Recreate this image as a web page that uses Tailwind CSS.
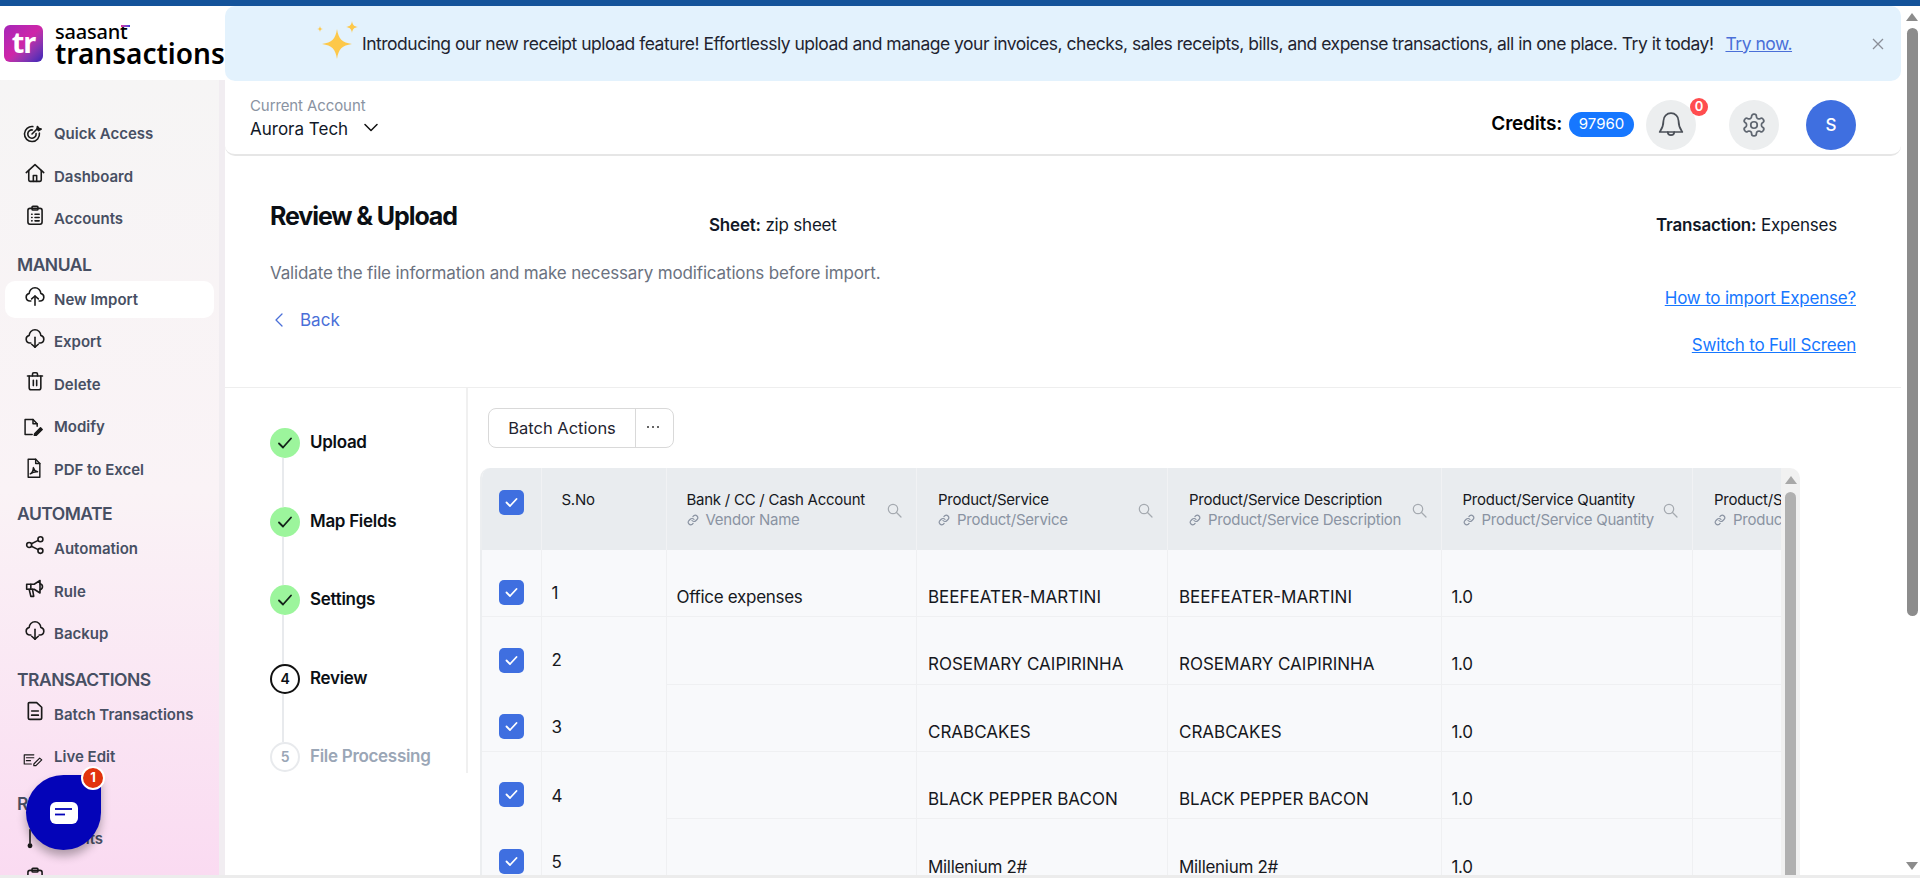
<!DOCTYPE html>
<html lang="en">
<head>
    <meta charset="UTF-8">
    <title>SaasAnt Transactions - Review & Upload</title>
    <script src="https://cdn.jsdelivr.net/npm/@tailwindcss/browser@4"></script>
</head>
<body class="relative h-[878px] overflow-hidden bg-white font-['Inter',sans-serif] text-[#111827]">
    <!-- Top bar -->
    <div class="h-[6px] bg-[#14539a]"></div>

    <div class="flex h-[869px]">
        <!-- Sidebar -->
        <aside class="w-[225px] shrink-0 flex flex-col overflow-hidden">
            <div class="h-[74px] shrink-0 bg-white flex items-center pl-[4px]">
                <div class="w-[39px] h-[37px] shrink-0 rounded-[6px] bg-linear-to-br from-[#a524b8] via-[#cf25a8] to-[#3a1fb8] flex items-center justify-center text-white text-[29px] font-bold leading-none font-['Noto_Sans',sans-serif] tracking-[-1px] pb-[3px]">tr</div>
                <div class="ml-[12px] pt-[3px] flex flex-col text-black font-['Noto_Sans',sans-serif]">
                    <span class="relative text-[20px] leading-[17px] font-medium tracking-[-0.2px] w-fit">saasant<span class="absolute right-[-2px] top-[2px] w-[9px] h-[2px] bg-linear-to-r from-[#e0209f] to-[#3a3ae0]"></span></span>
                    <span class="text-[28px] leading-[26px] font-semibold">transactions</span>
                </div>
            </div>
            <nav class="flex-1 border-r-[6px] border-[#f1edf1] bg-linear-to-b from-[#f6f5f5] via-[#faf3f6] via-50% to-[#fad9f1] pt-[33px] text-[15px] font-semibold text-[#474f63]">
                <a class="h-[42.5px] pl-[20px] flex items-center gap-[8px]">
                    <svg class="w-[20px] h-[20px] ml-[2px] mr-[4px] shrink-0" viewBox="0 0 24 24" fill="none" stroke="#1a1a1a" stroke-width="1.900" stroke-linecap="round" stroke-linejoin="round"><path d="M13 3.100A9 9 0 1 0 20.900 11"/><path d="M12.500 7.100A5 5 0 1 0 16.900 11.500"/><path d="M12 12l6-6"/><path d="M18 6l.5-3 2 2.500 2.500.5-3 2z" fill="#1a1a1a"/></svg>
                    <span>Quick Access</span>
                </a>
                <a class="h-[42.5px] pl-[20px] flex items-center gap-[8px]">
                    <svg class="w-[20px] h-[20px] ml-[5px] mr-[1px] shrink-0 -mt-2" viewBox="0 0 24 24" fill="none" stroke="#1a1a1a" stroke-width="1.900" stroke-linecap="round" stroke-linejoin="round"><path d="M1.500 11.500 12 2l10.500 9.500"/><path d="M4.500 9v11.500a1.500 1.500 0 0 0 1.500 1.500h12a1.500 1.500 0 0 0 1.500-1.500V9"/><path d="M10 22v-7h4v7"/></svg>
                    <span>Dashboard</span>
                </a>
                <a class="h-[42.5px] pl-[20px] flex items-center gap-[8px]">
                    <svg class="w-[20px] h-[20px] ml-[5px] mr-[1px] shrink-0 -mt-2" viewBox="0 0 24 24" fill="none" stroke="#1a1a1a" stroke-width="1.900" stroke-linecap="round" stroke-linejoin="round"><rect x="3.500" y="4" width="17" height="19" rx="2.500"/><rect x="8.500" y="1.500" width="7" height="4.500" rx="1"/><path d="M8 11h.5M8 15h.5M8 19h.5M12 11h5M12 15h5M12 19h5"/></svg>
                    <span>Accounts</span>
                </a>

                <div class="h-[38px] pl-[17px] pb-[3px] flex items-end text-[17.500px] leading-[22px] tracking-[-0.5px]">MANUAL</div>
                <div class="h-[42.5px] px-[5px] flex items-center">
                    <a class="w-full h-[37px] pl-[15px] flex items-center gap-[8px] bg-white rounded-[10px]">
                        <svg class="w-[20px] h-[20px] ml-[5px] mr-[1px] shrink-0 -mt-2" viewBox="0 0 24 24" fill="none" stroke="#1a1a1a" stroke-width="1.900" stroke-linecap="round" stroke-linejoin="round"><path d="M7 18H6a4.500 4.500 0 0 1-1-8.900 7 7 0 0 1 14 0A4.500 4.500 0 0 1 18 18h-1"/><path d="M12 23V12"/><path d="M8 15.500 12 12l4 3.500"/></svg>
                        <span>New Import</span>
                    </a>
                </div>
                <a class="h-[42.5px] pl-[20px] flex items-center gap-[8px]">
                    <svg class="w-[20px] h-[20px] ml-[5px] mr-[1px] shrink-0 -mt-2" viewBox="0 0 24 24" fill="none" stroke="#1a1a1a" stroke-width="1.900" stroke-linecap="round" stroke-linejoin="round"><path d="M7 18H6a4.500 4.500 0 0 1-1-8.900 7 7 0 0 1 14 0A4.500 4.500 0 0 1 18 18h-1"/><path d="M12 11v12"/><path d="M8 19.500 12 23l4-3.500"/></svg>
                    <span>Export</span>
                </a>
                <a class="h-[42.5px] pl-[20px] flex items-center gap-[8px]">
                    <svg class="w-[20px] h-[20px] ml-[5px] mr-[1px] shrink-0 -mt-2" viewBox="0 0 24 24" fill="none" stroke="#1a1a1a" stroke-width="1.900" stroke-linecap="round" stroke-linejoin="round"><path d="M3 6h18"/><path d="M9 6V3.500A1.500 1.500 0 0 1 10.500 2h3A1.500 1.500 0 0 1 15 3.500V6"/><path d="M5 6v14a2.500 2.500 0 0 0 2.500 2.500h9A2.500 2.500 0 0 0 19 20V6"/><path d="M10 11v6.500M14 11v6.500"/></svg>
                    <span>Delete</span>
                </a>
                <a class="h-[42.5px] pl-[20px] flex items-center gap-[8px]">
                    <svg class="w-[20px] h-[20px] ml-[3px] mr-[3px] shrink-0" viewBox="0 0 24 24" fill="none" stroke="#1a1a1a" stroke-width="1.800" stroke-linecap="round" stroke-linejoin="round"><path d="M11 21H2.500V3H12l5 5v3"/><path d="M12 3v5h5"/><path d="M14 20l7-7 2 2-7 7h-2.500z" fill="#1a1a1a"/></svg>
                    <span>Modify</span>
                </a>
                <a class="h-[42.5px] pl-[20px] flex items-center gap-[8px]">
                    <svg class="w-[20px] h-[20px] ml-[4px] mr-[2px] shrink-0 -mt-1" viewBox="0 0 24 24" fill="none" stroke="#1a1a1a" stroke-width="1.700" stroke-linecap="round" stroke-linejoin="round"><path d="M19 23H5V1.500h9l5 5z"/><path d="M14 1.500v5h5"/><path d="M7.500 19c2-1 3.500-4 3.800-7.500.6 3 2.200 4.500 5 5-3-.3-6 .6-8.800 2.500z"/></svg>
                    <span>PDF to Excel</span>
                </a>

                <div class="h-[37px] pl-[17px] pb-[3px] flex items-end text-[17.500px] leading-[22px] tracking-[-0.5px]">AUTOMATE</div>
                <a class="h-[42.5px] pl-[20px] flex items-center gap-[8px]">
                    <svg class="w-[20px] h-[20px] ml-[5px] mr-[1px] shrink-0 -mt-2" viewBox="0 0 24 24" fill="none" stroke="#1a1a1a" stroke-width="1.900" stroke-linecap="round" stroke-linejoin="round"><circle cx="18.500" cy="5" r="3"/><circle cx="5" cy="12" r="3"/><circle cx="18.500" cy="19" r="3"/><path d="M7.700 10.500 15.800 6.400M7.700 13.500l8.100 4.100"/></svg>
                    <span>Automation</span>
                </a>
                <a class="h-[42.5px] pl-[20px] flex items-center gap-[8px]">
                    <svg class="w-[20px] h-[20px] ml-[5px] mr-[1px] shrink-0 -mt-2" viewBox="0 0 24 24" fill="none" stroke="#1a1a1a" stroke-width="1.900" stroke-linecap="round" stroke-linejoin="round"><path d="M2 7.500h9l7-4.500v15l-7-4.500H2z"/><path d="M7 7.500v6M18 7c2 .5 3 2 3 3.500s-1 3-3 3.500"/><path d="M5 13.500 7 22h3.500l-1.500-8.500"/></svg>
                    <span>Rule</span>
                </a>
                <a class="h-[42.5px] pl-[20px] flex items-center gap-[8px]">
                    <svg class="w-[20px] h-[20px] ml-[5px] mr-[1px] shrink-0 -mt-2" viewBox="0 0 24 24" fill="none" stroke="#1a1a1a" stroke-width="1.900" stroke-linecap="round" stroke-linejoin="round"><path d="M7 18H6a4.500 4.500 0 0 1-1-8.900 7 7 0 0 1 14 0A4.500 4.500 0 0 1 18 18h-1"/><path d="M12 11v12"/><path d="M8 19.500 12 23l4-3.500"/></svg>
                    <span>Backup</span>
                </a>

                <div class="h-[38px] pl-[17px] pb-[3px] flex items-end text-[17.500px] leading-[22px] tracking-[-0.5px]">TRANSACTIONS</div>
                <a class="h-[42.5px] pl-[20px] flex items-center gap-[8px]">
                    <svg class="w-[20px] h-[20px] ml-[5px] mr-[1px] shrink-0 -mt-2" viewBox="0 0 24 24" fill="none" stroke="#1a1a1a" stroke-width="2" stroke-linecap="round" stroke-linejoin="round"><path d="M5 2h9l6 5.500V20a2 2 0 0 1-2 2H6a2 2 0 0 1-2-2V3a1 1 0 0 1 1-1z"/><path d="M8 12h8M8 17h8"/></svg>
                    <span>Batch Transactions</span>
                </a>
                <a class="h-[42.5px] pl-[20px] flex items-center gap-[8px]">
                    <svg class="w-[20px] h-[20px] ml-[3px] mr-[3px] shrink-0 mt-1" viewBox="0 0 24 24" fill="none" stroke="#1a1a1a" stroke-width="1.400" stroke-linecap="round" stroke-linejoin="round"><path d="M13 7H1.500v11H10"/><path d="M4 10.500h9M4 14h5"/><path d="M13 18l7-7 2.500 2-7 7H13z"/></svg>
                    <span>Live Edit</span>
                </a>

                <div class="h-[39px] pl-[17px] pb-[3px] flex items-end text-[17.500px] leading-[22px] tracking-[-0.5px]">REPORTS</div>
                <a class="h-[42.5px] pl-[20px] flex items-center gap-[8px]">
                    <svg class="w-[20px] h-[20px] ml-[5px] mr-[1px] shrink-0" viewBox="0 0 24 24" fill="none" stroke="#1a1a1a" stroke-width="1.900" stroke-linecap="round" stroke-linejoin="round"><path d="M6 1v16"/><circle cx="6" cy="20" r="2" fill="#1a1a1a"/></svg>
                    <span>Events</span>
                </a>
                <a class="h-[42.5px] pl-[20px] flex items-center gap-[8px]">
                    <svg class="w-[20px] h-[20px] ml-[5px] mr-[1px] shrink-0 -mt-2" viewBox="0 0 24 24" fill="none" stroke="#1a1a1a" stroke-width="1.900" stroke-linecap="round" stroke-linejoin="round"><rect x="3.500" y="4" width="17" height="19" rx="2.500"/><rect x="8.500" y="1.500" width="7" height="4.500" rx="1"/><path d="M8 11h.5M8 15h.5M12 11h5M12 15h5"/></svg>
                    <span>Account Summary</span>
                </a>
            </nav>
        </aside>

        <!-- Main -->
        <main class="w-[1676px] shrink-0 flex flex-col">
            <!-- Announcement -->
            <div class="h-[75px] shrink-0 rounded-[10px] bg-[#e3f2fd] flex items-center pl-[90px] pr-[16px] text-[17.500px] tracking-[-0.49px] text-[#1f2430]">
                <svg class="w-[46px] h-[46px] shrink-0" viewBox="0 0 46 46" fill="#fdc84a"><path d="M22 8c1.500 10 5 13.500 15 15-10 1.500-13.500 5-15 15-1.500-10-5-13.500-15-15 10-1.500 13.500-5 15-15z"/><path d="M37 0c.6 4 2 5.400 6 6-4 .6-5.400 2-6 6-.6-4-2-5.400-6-6 4-.6 5.400-2 6-6z"/><path d="M5 5c.3 2 1 2.700 3 3-2 .3-2.700 1-3 3-.3-2-1-2.700-3-3 2-.3 2.700-1 3-3z"/></svg>
                <span class="ml-[1px] pt-[1px] whitespace-nowrap">Introducing our new receipt upload feature! Effortlessly upload and manage your invoices, checks, sales receipts, bills, and expense transactions, all in one place. Try it today!</span>
                <a class="ml-[12px] pt-[1px] text-[#4a6fd8] underline whitespace-nowrap">Try now.</a>
                <svg class="w-[14px] h-[14px] ml-auto shrink-0" viewBox="0 0 14 14" fill="none" stroke="#8a8f98" stroke-width="1.300"><path d="M2 2l10 10M12 2 2 12"/></svg>
            </div>

            <!-- Account header -->
            <header class="h-[75px] shrink-0 rounded-b-[10px] border-b-2 border-[#e6e6e6] flex items-center pl-[25px] pr-[45px]">
                <div class="flex flex-col pt-[2px]">
                    <span class="text-[15px] leading-[20px] text-[#8a93a2] tracking-[-0.1px]">Current Account</span>
                    <span class="flex items-center text-[17px] leading-[26px] text-[#111827]">Aurora Tech
                        <svg class="w-[14px] h-[9px] ml-[16px] -mt-[2px]" viewBox="0 0 14 9" fill="none" stroke="#111" stroke-width="1.500" stroke-linecap="round" stroke-linejoin="round"><path d="M1 1.500 7 7.500l6-6"/></svg>
                    </span>
                </div>
                <div class="ml-auto mt-[14px] flex items-center">
                    <span class="text-[19px] font-semibold text-black tracking-[-0.2px]">Credits:</span>
                    <span class="ml-[7px] h-[25px] w-[65px] rounded-full bg-[#1677ff] text-white text-[15px] flex items-center justify-center -mt-px">97960</span>
                    <div class="relative ml-[12px] w-[50px] h-[50px] rounded-full bg-[#eceeef] flex items-center justify-center">
                        <svg class="w-[26px] h-[28px]" viewBox="0 0 24 26" fill="none" stroke="#4b5058" stroke-width="1.600" stroke-linecap="round" stroke-linejoin="round"><path d="M12 2a7 7 0 0 0-7 7c0 6-2.500 9-3.500 10.500h21C21.500 18 19 15 19 9a7 7 0 0 0-7-7z"/><path d="M9 19.500a3 3 0 0 0 6 0"/></svg>
                        <span class="absolute -right-[12px] -top-[2px] w-[18px] h-[18px] rounded-full bg-[#ff4d4f] text-white text-[13px] font-semibold flex items-center justify-center">0</span>
                    </div>
                    <div class="ml-[33px] w-[50px] h-[50px] rounded-full bg-[#eceeef] flex items-center justify-center">
                        <svg class="w-[26px] h-[26px]" viewBox="0 0 24 24" fill="none" stroke="#5f6670" stroke-width="1.600" stroke-linecap="round" stroke-linejoin="round"><path d="M12.220 2h-.44a2 2 0 0 0-2 2v.18a2 2 0 0 1-1 1.730l-.43.250a2 2 0 0 1-2 0l-.15-.080a2 2 0 0 0-2.730.730l-.22.380a2 2 0 0 0 .73 2.730l.15.100a2 2 0 0 1 1 1.720v.510a2 2 0 0 1-1 1.740l-.15.090a2 2 0 0 0-.73 2.730l.22.380a2 2 0 0 0 2.730.730l.15-.080a2 2 0 0 1 2 0l.43.250a2 2 0 0 1 1 1.730V20a2 2 0 0 0 2 2h.44a2 2 0 0 0 2-2v-.18a2 2 0 0 1 1-1.730l.43-.250a2 2 0 0 1 2 0l.15.080a2 2 0 0 0 2.730-.730l.22-.390a2 2 0 0 0-.73-2.730l-.15-.080a2 2 0 0 1-1-1.740v-.500a2 2 0 0 1 1-1.740l.15-.090a2 2 0 0 0 .73-2.730l-.22-.380a2 2 0 0 0-2.730-.730l-.15.080a2 2 0 0 1-2 0l-.43-.250a2 2 0 0 1-1-1.730V4a2 2 0 0 0-2-2z"/><circle cx="12" cy="12" r="3"/></svg>
                    </div>
                    <div class="ml-[27px] w-[50px] h-[50px] rounded-full bg-[#3f6fe0] text-white text-[17px] font-medium flex items-center justify-center pt-[2px]">S</div>
                </div>
            </header>

            <!-- Page title -->
            <section class="h-[232px] shrink-0 flex pl-[45px] pr-[45px] border-b border-[#eeeeee]">
                <div class="w-[439px] shrink-0 pt-[44px]">
                    <h1 class="text-[25px] leading-[32px] font-bold text-[#0b0f14] tracking-[-1.100px]">Review &amp; Upload</h1>
                    <p class="mt-[29px] text-[17px] leading-[24px] text-[#6b7280] tracking-[-0.150px] whitespace-nowrap">Validate the file information and make necessary modifications before import.</p>
                    <a class="mt-[23px] flex items-center text-[#4a6fd8] text-[17px] leading-[24px]">
                        <svg class="w-[10px] h-[14px] ml-[4px]" viewBox="0 0 10 14" fill="none" stroke="#4a6fd8" stroke-width="1.300" stroke-linecap="round" stroke-linejoin="round"><path d="M8 1 2 7l6 6"/></svg>
                        <span class="ml-[16px]">Back</span>
                    </a>
                </div>
                <div class="flex-1 pt-[58px] text-[17px] leading-[22px] tracking-[-0.2px]"><b class="font-semibold">Sheet:</b> zip sheet</div>
                <div class="flex flex-col items-end pt-[58px] text-[17px]">
                    <div class="pr-[19px] leading-[22px] tracking-[-0.2px] whitespace-nowrap"><b class="font-semibold">Transaction:</b> Expenses</div>
                    <a class="mt-[50px] leading-[24px] text-[#1677ff] underline tracking-[-0.2px] whitespace-nowrap">How to import Expense?</a>
                    <a class="mt-[23px] leading-[24px] text-[#1677ff] underline tracking-[-0.2px] whitespace-nowrap">Switch to Full Screen</a>
                </div>
            </section>

            <div class="flex flex-1 min-h-0">
                <!-- Stepper -->
                <div class="w-[243px] h-[385px] shrink-0 border-r-2 border-[#f0f0f0] pl-[45px] pt-[40px] text-[17px] leading-[24px] font-semibold text-[#0b0f14] tracking-[-0.3px]">
                    <div class="flex gap-[10px] h-[78.5px]">
                        <div class="flex flex-col">
                            <span class="w-[30px] h-[30px] rounded-full bg-[#9cf59c] flex items-center justify-center"><svg class="w-[14px] h-[12px]" viewBox="0 0 14 12" fill="none" stroke="#14231a" stroke-width="1.800" stroke-linecap="round" stroke-linejoin="round"><path d="M1 6.500 5 10.500 13 1.500"/></svg></span>
                            <span class="w-[2px] h-[48.5px] ml-[12px] bg-[#e8eaed]"></span>
                        </div>
                        <span class="pt-[2px]">Upload</span>
                    </div>
                    <div class="flex gap-[10px] h-[78.5px]">
                        <div class="flex flex-col">
                            <span class="w-[30px] h-[30px] rounded-full bg-[#9cf59c] flex items-center justify-center"><svg class="w-[14px] h-[12px]" viewBox="0 0 14 12" fill="none" stroke="#14231a" stroke-width="1.800" stroke-linecap="round" stroke-linejoin="round"><path d="M1 6.500 5 10.500 13 1.500"/></svg></span>
                            <span class="w-[2px] h-[48.5px] ml-[12px] bg-[#e8eaed]"></span>
                        </div>
                        <span class="pt-[2px]">Map Fields</span>
                    </div>
                    <div class="flex gap-[10px] h-[78.5px]">
                        <div class="flex flex-col">
                            <span class="w-[30px] h-[30px] rounded-full bg-[#9cf59c] flex items-center justify-center"><svg class="w-[14px] h-[12px]" viewBox="0 0 14 12" fill="none" stroke="#14231a" stroke-width="1.800" stroke-linecap="round" stroke-linejoin="round"><path d="M1 6.500 5 10.500 13 1.500"/></svg></span>
                            <span class="w-[2px] h-[48.5px] ml-[12px] bg-[#e8eaed]"></span>
                        </div>
                        <span class="pt-[2px]">Settings</span>
                    </div>
                    <div class="flex gap-[10px] h-[78.5px]">
                        <div class="flex flex-col">
                            <span class="w-[30px] h-[30px] rounded-full border-2 border-[#111] flex items-center justify-center text-[14px] font-semibold">4</span>
                            <span class="w-[2px] h-[48.5px] ml-[12px] bg-[#e8eaed]"></span>
                        </div>
                        <span class="pt-[2px]">Review</span>
                    </div>
                    <div class="flex gap-[10px] text-[#9aa6b6]">
                        <span class="w-[30px] h-[30px] rounded-full border-2 border-[#e8eaed] flex items-center justify-center text-[14px] font-semibold">5</span>
                        <span class="pt-[2px]">File Processing</span>
                    </div>
                </div>

                <!-- Review table -->
                <div class="flex-1 min-w-0 pl-[12px] pt-[20px]">
                    <div class="ml-[8px] w-fit h-[40px] flex rounded-[8px] border border-[#d9d9d9] text-[16.500px] text-[#1f2430]">
                        <button class="w-[147px] h-full pt-[1px] border-r border-[#d9d9d9]">Batch Actions</button>
                        <button class="w-[37px] h-full pr-[3px] flex items-center justify-center">
                            <svg class="w-[14px] h-[4px] -mt-[3px]" viewBox="0 0 14 4" fill="#333"><circle cx="2" cy="2" r="1"/><circle cx="7" cy="2" r="1"/><circle cx="12" cy="2" r="1"/></svg>
                        </button>
                    </div>

                    <div class="mt-[20px] w-[1320px] h-[407px] flex rounded-t-[10px] overflow-hidden border-l-2 border-[#eceef0]">
                        <div class="w-[1299px] shrink-0 overflow-hidden">
                            <table class="w-[1461px] table-fixed border-separate border-spacing-0 text-[17px] text-[#16181d] tracking-[-0.3px]">
                                <colgroup>
                                    <col class="w-[59.500px]"><col class="w-[125px]"><col class="w-[250.500px]"><col class="w-[251px]"><col class="w-[273.500px]"><col class="w-[251.500px]"><col class="w-[250px]">
                                </colgroup>
                                <thead class="bg-[#e9ecef] text-[15px] font-normal text-[#16181d] leading-[20px] tracking-[-0.25px]">
                                    <tr class="h-[82px]">
                                        <th class="align-top pt-[22px] pl-[17px] border-r border-[#f1f2f4] font-normal">
                                            <span class="w-[25px] h-[25px] rounded-[5px] bg-[#3f6fe0] flex items-center justify-center"><svg class="w-[13px] h-[11px]" viewBox="0 0 13 11" fill="none" stroke="#fff" stroke-width="1.800" stroke-linecap="round" stroke-linejoin="round"><path d="M1.500 5.500 5 9 11.500 2"/></svg></span>
                                        </th>
                                        <th class="align-top pt-[22px] pl-[20px] border-r border-[#f1f2f4] font-normal text-left">S.No</th>
                                        <th class="pl-[20px] pr-[14px] pt-[2px] border-r border-[#f1f2f4] font-normal text-left">
                                            <div class="flex items-center justify-between">
                                                <div><div class="whitespace-nowrap">Bank / CC / Cash Account</div>
                                                <div class="flex items-center text-[#8a93a2] whitespace-nowrap"><svg class="w-[12px] h-[12px] mr-[7px]" viewBox="0 0 24 24" fill="none" stroke="#8a93a2" stroke-width="2.400" stroke-linecap="round" stroke-linejoin="round"><path d="M10 13a5 5 0 0 0 7.500.5l3-3a5 5 0 0 0-7-7l-1.700 1.700"/><path d="M14 11a5 5 0 0 0-7.500-.5l-3 3a5 5 0 0 0 7 7l1.700-1.700"/></svg>Vendor Name</div></div>
                                                <svg class="w-[15px] h-[15px] shrink-0" viewBox="0 0 15 15" fill="none" stroke="#a5aab0" stroke-width="1.200" stroke-linecap="round"><circle cx="6" cy="6" r="4.700"/><path d="m9.500 9.500 4.500 4.500"/></svg>
                                            </div>
                                        </th>
                                        <th class="pl-[21px] pr-[14px] pt-[2px] border-r border-[#f1f2f4] font-normal text-left">
                                            <div class="flex items-center justify-between">
                                                <div><div class="whitespace-nowrap">Product/Service</div>
                                                <div class="flex items-center text-[#8a93a2] whitespace-nowrap"><svg class="w-[12px] h-[12px] mr-[7px]" viewBox="0 0 24 24" fill="none" stroke="#8a93a2" stroke-width="2.400" stroke-linecap="round" stroke-linejoin="round"><path d="M10 13a5 5 0 0 0 7.500.5l3-3a5 5 0 0 0-7-7l-1.700 1.700"/><path d="M14 11a5 5 0 0 0-7.500-.5l-3 3a5 5 0 0 0 7 7l1.700-1.700"/></svg>Product/Service</div></div>
                                                <svg class="w-[15px] h-[15px] shrink-0" viewBox="0 0 15 15" fill="none" stroke="#a5aab0" stroke-width="1.200" stroke-linecap="round"><circle cx="6" cy="6" r="4.700"/><path d="m9.500 9.500 4.500 4.500"/></svg>
                                            </div>
                                        </th>
                                        <th class="pl-[21px] pr-[14px] pt-[2px] border-r border-[#f1f2f4] font-normal text-left">
                                            <div class="flex items-center justify-between">
                                                <div><div class="whitespace-nowrap">Product/Service Description</div>
                                                <div class="flex items-center text-[#8a93a2] whitespace-nowrap"><svg class="w-[12px] h-[12px] mr-[7px]" viewBox="0 0 24 24" fill="none" stroke="#8a93a2" stroke-width="2.400" stroke-linecap="round" stroke-linejoin="round"><path d="M10 13a5 5 0 0 0 7.500.5l3-3a5 5 0 0 0-7-7l-1.700 1.700"/><path d="M14 11a5 5 0 0 0-7.500-.5l-3 3a5 5 0 0 0 7 7l1.700-1.700"/></svg>Product/Service Description</div></div>
                                                <svg class="w-[15px] h-[15px] shrink-0" viewBox="0 0 15 15" fill="none" stroke="#a5aab0" stroke-width="1.200" stroke-linecap="round"><circle cx="6" cy="6" r="4.700"/><path d="m9.500 9.500 4.500 4.500"/></svg>
                                            </div>
                                        </th>
                                        <th class="pl-[21px] pr-[14px] pt-[2px] border-r border-[#f1f2f4] font-normal text-left">
                                            <div class="flex items-center justify-between">
                                                <div><div class="whitespace-nowrap">Product/Service Quantity</div>
                                                <div class="flex items-center text-[#8a93a2] whitespace-nowrap"><svg class="w-[12px] h-[12px] mr-[7px]" viewBox="0 0 24 24" fill="none" stroke="#8a93a2" stroke-width="2.400" stroke-linecap="round" stroke-linejoin="round"><path d="M10 13a5 5 0 0 0 7.500.5l3-3a5 5 0 0 0-7-7l-1.700 1.700"/><path d="M14 11a5 5 0 0 0-7.500-.5l-3 3a5 5 0 0 0 7 7l1.700-1.700"/></svg>Product/Service Quantity</div></div>
                                                <svg class="w-[15px] h-[15px] shrink-0" viewBox="0 0 15 15" fill="none" stroke="#a5aab0" stroke-width="1.200" stroke-linecap="round"><circle cx="6" cy="6" r="4.700"/><path d="m9.500 9.500 4.500 4.500"/></svg>
                                            </div>
                                        </th>
                                        <th class="pl-[21px] pr-[14px] pt-[2px] font-normal text-left">
                                            <div><div class="whitespace-nowrap">Product/Service Rate</div>
                                            <div class="flex items-center text-[#8a93a2] whitespace-nowrap"><svg class="w-[12px] h-[12px] mr-[7px]" viewBox="0 0 24 24" fill="none" stroke="#8a93a2" stroke-width="2.400" stroke-linecap="round" stroke-linejoin="round"><path d="M10 13a5 5 0 0 0 7.500.5l3-3a5 5 0 0 0-7-7l-1.700 1.700"/><path d="M14 11a5 5 0 0 0-7.500-.5l-3 3a5 5 0 0 0 7 7l1.700-1.700"/></svg>Product/Service Rate</div></div>
                                        </th>
                                    </tr>
                                </thead>
                                <tbody class="bg-[#f8f9fb] leading-[22px]">
                                    <tr class="h-[67px]">
                                        <td class="align-bottom pl-[17px] pb-[11px] border-r border-b border-[#eff0f2]"><span class="w-[25px] h-[25px] rounded-[5px] bg-[#3f6fe0] flex items-center justify-center"><svg class="w-[13px] h-[11px]" viewBox="0 0 13 11" fill="none" stroke="#fff" stroke-width="1.800" stroke-linecap="round" stroke-linejoin="round"><path d="M1.500 5.500 5 9 11.500 2"/></svg></span></td>
                                        <td class="align-bottom pl-[10px] pb-[12px] border-r border-b border-[#eff0f2]">1</td>
                                        <td class="align-bottom pl-[10px] pb-[8px] border-r border-b border-[#eff0f2]">Office expenses</td>
                                        <td class="align-bottom pl-[11px] pb-[8px] tracking-normal border-r border-b border-[#eff0f2]">BEEFEATER-MARTINI</td>
                                        <td class="align-bottom pl-[11px] pb-[8px] tracking-normal border-r border-b border-[#eff0f2]">BEEFEATER-MARTINI</td>
                                        <td class="align-bottom pl-[10px] pb-[8px] border-r border-b border-[#eff0f2]">1.0</td>
                                        <td class="border-b border-[#eff0f2]"></td>
                                    </tr>
                                    <tr class="h-[68px]">
                                        <td class="align-bottom pl-[17px] pb-[12px] border-r border-[#eff0f2]"><span class="w-[25px] h-[25px] rounded-[5px] bg-[#3f6fe0] flex items-center justify-center"><svg class="w-[13px] h-[11px]" viewBox="0 0 13 11" fill="none" stroke="#fff" stroke-width="1.800" stroke-linecap="round" stroke-linejoin="round"><path d="M1.500 5.500 5 9 11.500 2"/></svg></span></td>
                                        <td class="align-bottom pl-[10px] pb-[14px] border-r border-[#eff0f2]">2</td>
                                        <td class="align-bottom pl-[10px] pb-[9px] border-r border-b border-[#eff0f2]"></td>
                                        <td class="align-bottom pl-[11px] pb-[9px] tracking-normal border-r border-b border-[#eff0f2]">ROSEMARY CAIPIRINHA</td>
                                        <td class="align-bottom pl-[11px] pb-[9px] tracking-normal border-r border-b border-[#eff0f2]">ROSEMARY CAIPIRINHA</td>
                                        <td class="align-bottom pl-[10px] pb-[9px] border-r border-b border-[#eff0f2]">1.0</td>
                                        <td class="border-b border-[#eff0f2]"></td>
                                    </tr>
                                    <tr class="h-[67px]">
                                        <td class="align-bottom pl-[17px] pb-[12px] border-r border-b border-[#eff0f2]"><span class="w-[25px] h-[25px] rounded-[5px] bg-[#3f6fe0] flex items-center justify-center"><svg class="w-[13px] h-[11px]" viewBox="0 0 13 11" fill="none" stroke="#fff" stroke-width="1.800" stroke-linecap="round" stroke-linejoin="round"><path d="M1.500 5.500 5 9 11.500 2"/></svg></span></td>
                                        <td class="align-bottom pl-[10px] pb-[13px] border-r border-b border-[#eff0f2]">3</td>
                                        <td class="align-bottom pl-[10px] pb-[8px] border-r border-b border-[#eff0f2]"></td>
                                        <td class="align-bottom pl-[11px] pb-[8px] tracking-normal border-r border-b border-[#eff0f2]">CRABCAKES</td>
                                        <td class="align-bottom pl-[11px] pb-[8px] tracking-normal border-r border-b border-[#eff0f2]">CRABCAKES</td>
                                        <td class="align-bottom pl-[10px] pb-[8px] border-r border-b border-[#eff0f2]">1.0</td>
                                        <td class="border-b border-[#eff0f2]"></td>
                                    </tr>
                                    <tr class="h-[67px]">
                                        <td class="align-bottom pl-[17px] pb-[12px] border-r border-[#eff0f2]"><span class="w-[25px] h-[25px] rounded-[5px] bg-[#3f6fe0] flex items-center justify-center"><svg class="w-[13px] h-[11px]" viewBox="0 0 13 11" fill="none" stroke="#fff" stroke-width="1.800" stroke-linecap="round" stroke-linejoin="round"><path d="M1.500 5.500 5 9 11.500 2"/></svg></span></td>
                                        <td class="align-bottom pl-[10px] pb-[12px] border-r border-[#eff0f2]">4</td>
                                        <td class="align-bottom pl-[10px] pb-[8px] border-r border-b border-[#eff0f2]"></td>
                                        <td class="align-bottom pl-[11px] pb-[8px] tracking-normal border-r border-b border-[#eff0f2]">BLACK PEPPER BACON</td>
                                        <td class="align-bottom pl-[11px] pb-[8px] tracking-normal border-r border-b border-[#eff0f2]">BLACK PEPPER BACON</td>
                                        <td class="align-bottom pl-[10px] pb-[8px] border-r border-b border-[#eff0f2]">1.0</td>
                                        <td class="border-b border-[#eff0f2]"></td>
                                    </tr>
                                    <tr class="h-[67px]">
                                        <td class="align-bottom pl-[17px] pb-[12px] border-r border-[#eff0f2]"><span class="w-[25px] h-[25px] rounded-[5px] bg-[#3f6fe0] flex items-center justify-center"><svg class="w-[13px] h-[11px]" viewBox="0 0 13 11" fill="none" stroke="#fff" stroke-width="1.800" stroke-linecap="round" stroke-linejoin="round"><path d="M1.500 5.500 5 9 11.500 2"/></svg></span></td>
                                        <td class="align-bottom pl-[10px] pb-[13px] border-r border-[#eff0f2]">5</td>
                                        <td class="align-bottom pl-[10px] pb-[8px] border-r border-[#eff0f2]"></td>
                                        <td class="align-bottom pl-[11px] pb-[8px] border-r border-[#eff0f2]">Millenium 2#</td>
                                        <td class="align-bottom pl-[11px] pb-[8px] border-r border-[#eff0f2]">Millenium 2#</td>
                                        <td class="align-bottom pl-[10px] pb-[8px] border-r border-[#eff0f2]">1.0</td>
                                        <td></td>
                                    </tr>
                                </tbody>
                            </table>
                        </div>
                        <!-- Table scrollbar -->
                        <div class="w-[19px] shrink-0 bg-[#f1f1f1] flex flex-col items-center pt-[8px]">
                            <svg class="w-[12px] h-[8px] shrink-0" viewBox="0 0 12 8" fill="#a8a8a8"><path d="M6 0l6 8H0z"/></svg>
                            <div class="mt-[8px] w-[11px] flex-1 rounded-t-full bg-[#b0b0b0]"></div>
                        </div>
                    </div>
                </div>
            </div>
        </main>

        <!-- Page scrollbar -->
        <div class="flex-1 flex flex-col items-center pt-[7px] pb-[5px] pl-[3px]">
            <svg class="w-[12px] h-[8px] shrink-0" viewBox="0 0 12 8" fill="#8c8c8c"><path d="M6 0l6 8H0z"/></svg>
            <div class="mt-[7px] w-[11px] h-[588px] rounded-full bg-[#8c8c8c]"></div>
            <svg class="mt-auto w-[12px] h-[8px] shrink-0" viewBox="0 0 12 8" fill="#8c8c8c"><path d="M6 8l6-8H0z"/></svg>
        </div>
    </div>

    <!-- Bottom scrollbar edge -->
    <div class="h-[3px] bg-[#ececec]"></div>

    <!-- Chat launcher -->
    <button class="absolute left-[26px] top-[775px] w-[75px] h-[75px] rounded-full rounded-tr-[24px] bg-[#0404b8] shadow-[0_6px_10px_rgba(0,0,0,0.3)] flex items-center justify-center">
        <svg class="w-[28px] h-[22px]" viewBox="0 0 28 22"><rect width="28" height="22" rx="6" fill="#fff"/><path d="M5 7h17" stroke="#0404b8" stroke-width="1.800"/><path d="M5 12.500h10" stroke="#0404b8" stroke-width="1.800"/></svg>
        <span class="absolute -right-[4px] -top-[9px] w-[24px] h-[24px] rounded-full bg-[#e2330d] border-2 border-white text-white text-[13px] font-bold flex items-center justify-center">1</span>
    </button>
</body>
</html>
